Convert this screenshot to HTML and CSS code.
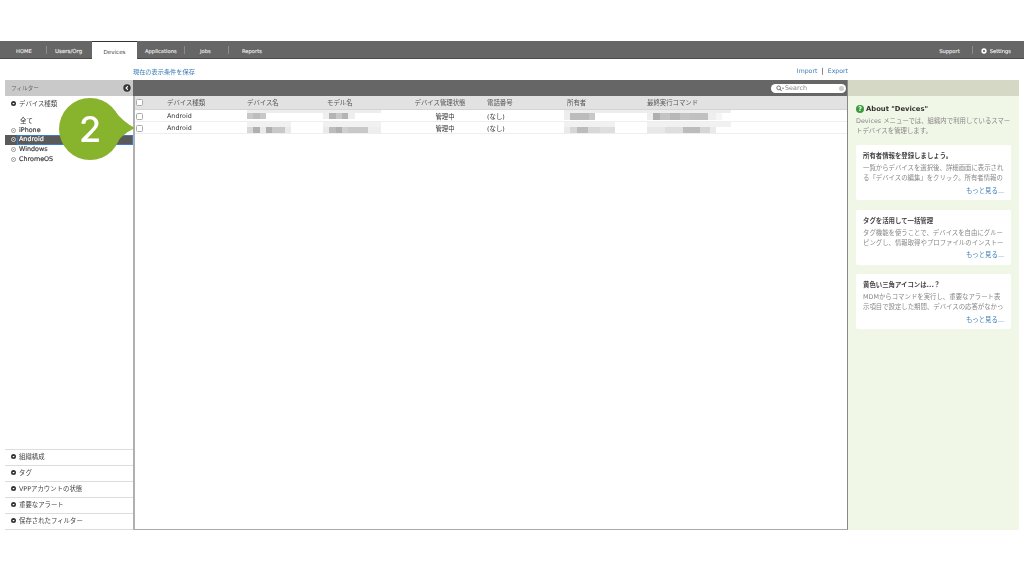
FILE: index.html
```html
<!DOCTYPE html>
<html lang="ja">
<head>
<meta charset="utf-8">
<title>Devices</title>
<link rel="stylesheet" href="styles.css">
</head>
<body>
<div class="page">
  <nav class="topbar">
    <div class="tabs">
      <a class="tab t-home">HOME</a><i class="sep s1"></i>
      <a class="tab t-users">Users/Org</a>
      <a class="tab t-devices">Devices</a>
      <a class="tab t-apps">Applications</a><i class="sep"></i>
      <a class="tab t-jobs">Jobs</a><i class="sep"></i>
      <a class="tab t-reports">Reports</a>
    </div>
    <div class="tabs-right">
      <a class="tab">Support</a><i class="sep"></i>
      <a class="tab settings"><svg class="ic" viewBox="0 0 10 10"><circle cx="5" cy="5" r="4.4" fill="#fff"/><circle cx="5" cy="5" r="1.8" fill="#666"/></svg>Settings</a>
    </div>
  </nav>
  <div class="toolbar">
    <a class="link">現在の表示条件を保存</a>
    <div class="io"><a class="link">Import</a><span class="bar">|</span><a class="link">Export</a></div>
  </div>
  <div class="content">
    <aside class="filters">
      <div class="f-head"><span>フィルター</span>
        <svg class="ic-back" viewBox="0 0 10 10"><circle cx="5" cy="5" r="4.6" fill="#333"/><path d="M6 2.8 3.8 5 6 7.2" fill="none" stroke="#fff" stroke-width="1.4"/></svg>
      </div>
      <div class="f-sec"><svg class="ic-o" viewBox="0 0 10 10"><circle cx="5" cy="5" r="5" fill="#333"/><path d="M2.5 4 5 7l2.5-3z" fill="#fff"/></svg>デバイス種類</div>
      <ul class="f-list">
        <li class="all">全て</li>
        <li><i class="dot"></i>iPhone</li>
        <li class="sel"><i class="dot"></i><span class="sel-name">Android</span></li>
        <li><i class="dot"></i>Windows</li>
        <li><i class="dot"></i>ChromeOS</li>
      </ul>
      <div class="f-bottom">
        <div class="f-sec b"><svg class="ic-o" viewBox="0 0 10 10"><circle cx="5" cy="5" r="5" fill="#333"/><path d="M2.5 4 5 7l2.5-3z" fill="#fff"/></svg>組織構成</div>
        <div class="f-sec b"><svg class="ic-o" viewBox="0 0 10 10"><circle cx="5" cy="5" r="5" fill="#333"/><path d="M2.5 4 5 7l2.5-3z" fill="#fff"/></svg>タグ</div>
        <div class="f-sec b"><svg class="ic-o" viewBox="0 0 10 10"><circle cx="5" cy="5" r="5" fill="#333"/><path d="M2.5 4 5 7l2.5-3z" fill="#fff"/></svg>VPPアカウントの状態</div>
        <div class="f-sec b"><svg class="ic-o" viewBox="0 0 10 10"><circle cx="5" cy="5" r="5" fill="#333"/><path d="M2.5 4 5 7l2.5-3z" fill="#fff"/></svg>重要なアラート</div>
        <div class="f-sec b"><svg class="ic-o" viewBox="0 0 10 10"><circle cx="5" cy="5" r="5" fill="#333"/><path d="M2.5 4 5 7l2.5-3z" fill="#fff"/></svg>保存されたフィルター</div>
      </div>
    </aside>
    <main class="main">
      <div class="m-head">
        <div class="search">
          <svg class="ic-s" viewBox="0 0 12 10"><circle cx="4" cy="4" r="2.8" fill="none" stroke="#555" stroke-width="1.2"/><path d="M6 6l2.4 2.8" stroke="#555" stroke-width="1.5"/><path d="M9 4h3l-1.5 2z" fill="#555"/></svg>
          <span>Search</span><i class="clear"></i>
        </div>
      </div>
      <div class="row r-head">
        <div class="c c0"><i class="cb"></i></div><div class="c c1">デバイス種類</div><div class="c c2">デバイス名</div><div class="c c3">モデル名</div><div class="c c4 hc">デバイス管理状態</div><div class="c c5">電話番号</div><div class="c c6">所有者</div><div class="c c7">最終実行コマンド</div>
      </div>
      <div class="row body">
        <div class="c c0"><i class="cb"></i></div><div class="c c1">Android</div>
        <div class="c c2 cm"><i class="mos m1"></i></div><div class="c c3 cm"><i class="mos m2"></i></div>
        <div class="c c4 ctr">管理中</div><div class="c c5">(なし)</div>
        <div class="c c6 cm"><i class="mos m3"></i></div><div class="c c7 cm"><i class="mos m4"></i></div>
      </div>
      <div class="row body">
        <div class="c c0"><i class="cb"></i></div><div class="c c1">Android</div>
        <div class="c c2 cm"><i class="mos m5"></i></div><div class="c c3 cm"><i class="mos m6"></i></div>
        <div class="c c4 ctr">管理中</div><div class="c c5">(なし)</div>
        <div class="c c6 cm"><i class="mos m7"></i></div><div class="c c7 cm"><i class="mos m8"></i></div>
      </div>
    </main>
    <aside class="help">
      <div class="h-head"></div>
      <div class="h-body">
        <h2 class="h-title"><svg class="ic-q" viewBox="0 0 10 10"><circle cx="5" cy="5" r="5" fill="#3a9a3a"/><text x="5" y="8" text-anchor="middle" class="q">?</text></svg>About "Devices"</h2>
        <p class="h-intro">Devices メニューでは、組織内で利用しているスマートデバイスを管理します。</p>
        <section class="card">
          <h3>所有者情報を登録しましょう。</h3>
          <p>一覧からデバイスを選択後、詳細画面に表示される「デバイスの編集」をクリック。所有者情報の</p>
          <a class="more">もっと見る...</a>
        </section>
        <section class="card">
          <h3>タグを活用して一括管理</h3>
          <p>タグ機能を使うことで、デバイスを自由にグルーピングし、情報取得やプロファイルのインストー</p>
          <a class="more">もっと見る...</a>
        </section>
        <section class="card">
          <h3>黄色い三角アイコンは...？</h3>
          <p>MDMからコマンドを実行し、重要なアラート表示項目で設定した期間、デバイスの応答がなかっ</p>
          <a class="more">もっと見る...</a>
        </section>
      </div>
    </aside>
  </div>
  <div class="callout">
    <svg class="callout-bg" viewBox="0 0 80 64"><circle cx="31" cy="31" r="31" fill="#88b32c"/><path d="M55 12Q64 24 76 30 62 36 50 54z" fill="#88b32c"/></svg>
    <span class="callout-n">2</span>
  </div>
</div>
</body>
</html>
```
FILE: styles.css
```css
* { box-sizing: border-box; }
html, body { margin: 0; padding: 0; background: #fff; }
body { font-family: "DejaVu Sans", "Noto Sans CJK JP", sans-serif; font-size: 6.4px; color: #444; overflow: hidden; }
.page { position: relative; width: 1024px; height: 576px; padding-top: 41px; filter: blur(0.3px); }

.topbar { height: 18px; background: #666; border-bottom: 1px solid #4a4a4a; display: flex; justify-content: space-between; align-items: stretch; font-size: 5.2px; color: #f2f2f2; -webkit-text-stroke: 0.1px #f2f2f2; }
.tabs, .tabs-right { display: flex; align-items: center; padding-top: 2px; }
.tab { display: block; white-space: nowrap; }
.sep { width: 1px; height: 8px; background: #8c8c8c; display: block; margin-top: -2px; }
.t-home { margin-left: 16px; width: 30px; }
.t-users { margin-left: 8px; width: 37px; font-size: 5.5px; }
.t-devices { align-self: stretch; margin-top: -2px; width: 45px; background: #fff; color: #444; -webkit-text-stroke: 0; text-align: center; line-height: 20px; height: 18px; border-top: 1px solid #333; font-size: 5.6px; }
.t-apps { margin-left: 8px; width: 39px; }
.t-jobs { margin-left: 15px; width: 28px; }
.t-reports { margin-left: 13px; width: 30px; }
.tabs-right .sep { margin: -2px 8px 0 12px; }
.settings { display: flex; align-items: center; gap: 3px; margin-right: 13px; }
.ic { width: 6px; height: 6px; }

.toolbar { height: 21px; display: flex; justify-content: space-between; align-items: center; padding: 7px 176px 4px 133px; }
.link { color: #3a7cb5; font-size: 6.2px; }
.io { display: flex; gap: 4px; }
.bar { color: #333; font-size: 7px; }

.content { display: flex; height: 450px; margin-left: 5px; width: 1014px; }

.filters { width: 128px; display: flex; flex-direction: column; border-bottom: 1px solid #ddd; }
.f-head { height: 16px; background: #c9c9c9; display: flex; justify-content: space-between; align-items: center; padding: 0 2px 0 6px; font-size: 5.6px; color: #666; }
.ic-back { width: 8px; height: 8px; }
.f-sec { display: flex; align-items: center; gap: 3px; height: 14px; padding-left: 6px; color: #444; }
.ic-o { width: 5px; height: 5px; flex: none; }
.f-list { list-style: none; margin: 5.5px 0 0; padding: 0; flex: 1; color: #333; -webkit-text-stroke: 0.15px #333; }
.f-list li { height: 9.7px; display: flex; align-items: center; padding-left: 6px; gap: 3px; }
.f-list .all { padding-left: 15px; -webkit-text-stroke: 0; }
.dot { width: 5px; height: 5px; border: 1px solid #999; border-radius: 50%; display: block; background: radial-gradient(circle, #999 0 0.8px, transparent 1px); flex: none; }
.f-list .sel { background: #5a5a5a; color: #fff; -webkit-text-stroke: 0.15px #fff; border-right: 1px solid #3a7cc8; }
.f-list .sel .dot { border-color: #ccc; background: radial-gradient(circle, #ccc 0 0.8px, transparent 1px); }
.sel-name { display: block; flex: 1; height: 100%; border: 1px solid #3a7cc8; border-right: 0; line-height: 7.5px; margin-left: -2px; padding-left: 1px; }
.f-bottom .f-sec.b { height: 16px; border-top: 1px solid #ddd; padding-bottom: 2px; }

.main { width: 715px; border-left: 2px solid #b0b0b0; border-right: 1px solid #888; border-bottom: 1px solid #aaa; }
.m-head { height: 16px; margin-left: -2px; background: #666; display: flex; justify-content: flex-end; align-items: center; padding-right: 1px; }
.search { width: 75px; height: 9px; background: #fff; border-radius: 5px; display: flex; align-items: center; gap: 1px; padding: 0 2px 0 5px; color: #888; font-size: 6.4px; }
.search span { flex: 1; }
.ic-s { width: 8px; height: 7px; flex: none; }
.clear { width: 5px; height: 5px; border-radius: 50%; background: #ccc; display: block; }

.row { display: flex; height: 12px; align-items: center; border-bottom: 1px solid #eee; color: #333; }
.row.body { padding-top: 1px; }
.r-head { height: 14px; background: #e2e2e2; border-bottom: 1px solid #d4d4d4; color: #555; }
.c { display: block; flex: none; white-space: nowrap; }
.cm { align-self: stretch; margin-top: -1px; }
.c0 { width: 32px; padding-left: 1px; }
.c1 { width: 80px; }
.c2 { width: 80px; }
.c3 { width: 80px; }
.c4 { width: 76px; }
.ctr { text-align: center; }
.hc { text-align: center; padding-right: 10px; }
.c5 { width: 84px; padding-left: 4px; }
.c6 { width: 80px; }
.c7 { width: 120px; }
.cb { display: block; width: 7px; height: 7px; border: 1px solid #aaa; border-radius: 1.5px; background: #fff; }

.mos { display: block; height: 100%; position: relative; }
.m1 { width: 134px; background:
  linear-gradient(#ededed, #ededed) 0 0 / 100% 3px no-repeat,
  linear-gradient(90deg, #c8c8c8 0 6px, #bdbdbd 6px 13px, #c8c8c8 13px 19px, transparent 19px) 0 3px / 100% 6px no-repeat; }
.m2 { width: 54px; left: -4px; background:
  linear-gradient(#ededed, #ededed) 0 0 / 100% 3px no-repeat,
  linear-gradient(90deg, #eee 0 6px, #b4b4b4 6px 13px, #c8c8c8 13px 19px, #b4b4b4 19px 25px, #eee 25px 32px, transparent 32px) 0 3px / 100% 6px no-repeat; }
.m3 { width: 100px; left: -3px; background:
  linear-gradient(#ededed, #ededed) 0 0 / 100% 3px no-repeat,
  linear-gradient(90deg, #eee 0 6px, #bcbcbc 6px 25px, #c8c8c8 25px 31px, transparent 31px) 0 3px / 100% 7px no-repeat; }
.m4 { width: 84px; background:
  linear-gradient(#ededed, #ededed) 0 0 / 100% 3px no-repeat,
  linear-gradient(90deg, #eee 0 6px, #b0b0b0 6px 13px, #c4c4c4 13px 23px, #b8b8b8 23px 33px, #c4c4c4 33px 43px, #c0c0c0 43px 61px, #eee 61px 69px, #f6f6f6 69px 75px, transparent 75px) 0 3px / 100% 7px no-repeat; }
.m5 { width: 44px; background:
  linear-gradient(#f1f1f1, #f1f1f1) 0 0 / 100% 5px no-repeat,
  linear-gradient(90deg, #d8d8d8 0 6px, #b0b0b0 6px 13px, #eaeaea 13px 19px, #b0b0b0 19px 25px, #c8c8c8 25px 38px, #eaeaea 38px 44px) 0 5px / 100% 6px no-repeat; }
.m6 { width: 58px; left: -4px; background:
  linear-gradient(#f1f1f1, #f1f1f1) 0 0 / 100% 5px no-repeat,
  linear-gradient(90deg, #eaeaea 0 6px, #bcbcbc 6px 13px, #b0b0b0 13px 19px, #d0d0d0 19px 25px, #c8c8c8 25px 45px, #eee 45px 58px) 0 5px / 100% 6px no-repeat; }
.m7 { width: 51px; left: -3px; background:
  linear-gradient(#f1f1f1, #f1f1f1) 0 0 / 100% 5px no-repeat,
  linear-gradient(90deg, #eaeaea 0 6px, #d6d6d6 6px 13px, #bcbcbc 13px 24px, #d8d8d8 24px 36px, #dedede 36px 51px) 0 5px / 100% 6px no-repeat; }
.m8 { width: 84px; background:
  linear-gradient(#f1f1f1, #f1f1f1) 0 0 / 100% 5px no-repeat,
  linear-gradient(90deg, #e8e8e8 0 18px, #dedede 18px 36px, #bcbcbc 36px 53px, #d6d6d6 53px 63px, #eaeaea 63px 69px, transparent 69px) 0 5px / 100% 6px no-repeat; }

.help { width: 171px; display: flex; flex-direction: column; }
.h-head { height: 16px; background: #d4d8c4; flex: none; }
.h-body { flex: 1; background: #f1f7e7; padding: 0 8px; }
.h-title { display: flex; align-items: center; gap: 2px; margin: 8.5px 0 0; height: 8px; font-size: 6.8px; font-weight: bold; color: #333; }
.ic-q { width: 8px; height: 8px; }
.q { font-size: 8px; fill: #fff; font-weight: bold; }
.h-intro { margin: 3.5px 0 0; line-height: 10px; color: #888; }
.card { background: #fff; border-radius: 2px; height: 55px; padding: 7px 7px 0; margin-top: 9.5px; display: flex; flex-direction: column; }
.h-intro + .card { margin-top: 9px; }
.card h3 { margin: 0; font-size: 6.4px; line-height: 9px; font-weight: bold; color: #444; }
.card p { margin: 2px 0 0; line-height: 10px; color: #888; height: 20px; overflow: hidden; }
.more { color: #3a7cb5; text-align: right; margin-top: 3.5px; line-height: 9px; }

.callout { position: absolute; left: 59px; top: 98px; width: 80px; height: 64px; }
.callout-bg { display: block; width: 80px; height: 64px; }
.callout-n { position: absolute; left: 0; top: 0; width: 62px; text-align: center; line-height: 62px; font-size: 36px; color: #fff; font-family: "Inter", "Liberation Sans", sans-serif; font-weight: 500; }
```
